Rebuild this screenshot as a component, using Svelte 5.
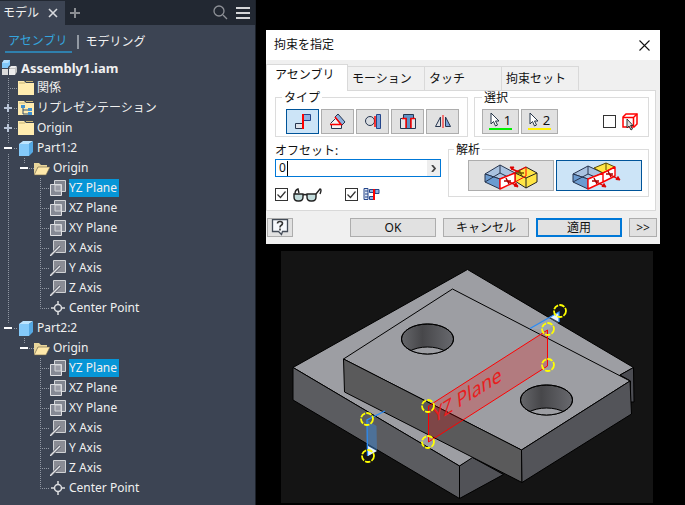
<script>
  const planes = ['YZ Plane', 'XZ Plane', 'XY Plane'];
  const axes = ['X Axis', 'Y Axis', 'Z Axis'];

  function part(name, last) {
    return [
      { label: name, icon: 'cube', depth: 1, mark: 'minus', last },
      { label: 'Origin', icon: 'open', depth: 2, mark: 'minus', trunk: !last },
      ...planes.map((label, i) => ({ label, icon: 'plane', depth: 3, trunk: !last, selected: i === 0 })),
      ...axes.map((label) => ({ label, icon: 'axis', depth: 3, trunk: !last })),
      { label: 'Center Point', icon: 'point', depth: 3, trunk: !last, end: true }
    ];
  }

  const rows = [
    { label: '関係', icon: 'folder', depth: 1 },
    { label: 'リプレゼンテーション', icon: 'views', depth: 1, mark: 'plus' },
    { label: 'Origin', icon: 'folder', depth: 1, mark: 'plus' },
    ...part('Part1:2', false),
    ...part('Part2:2', true)
  ];

  const types = ['mate', 'angle', 'tangent', 'insert', 'symmetry'];
  const typeNames = ['メイト', '角度', '正接', '挿入', '対称'];
  const tabs = ['アセンブリ', 'モーション', 'タッチ', '拘束セット'];
  const handles = [[560, 311], [548, 329], [548, 365], [428, 406], [428, 442], [367, 419], [368, 456]];

  let activeTab = $state(0);
  let type = $state('mate');
  let solution = $state('flush');
  let offset = $state('0');
  let preview = $state(true);
  let predict = $state(true);
  let pickFirst = $state(false);
</script>

<div class="app">
  <aside>
    <header>
      <div class="doc">モデル
        <button aria-label="閉じる"><svg width="10" height="10" viewBox="0 0 10 10"><path d="M1 1l8 8M9 1l-8 8" stroke="#d8dade" stroke-width="1.6" /></svg></button>
      </div>
      <button aria-label="追加"><svg width="12" height="12" viewBox="0 0 12 12"><path d="M6 1v10M1 6h10" stroke="#8b8e93" stroke-width="2" /></svg></button>
      <span class="spring"></span>
      <button aria-label="検索"><svg width="15" height="15" viewBox="0 0 15 15" fill="none" stroke="#8e9197" stroke-width="1.3"><circle cx="6" cy="6" r="5" /><path d="M10 10l4 4" /></svg></button>
      <button aria-label="メニュー"><svg width="14" height="12" viewBox="0 0 14 12"><path d="M0 1h14M0 6h14M0 11h14" stroke="#d6d7d9" stroke-width="2" /></svg></button>
    </header>
    <nav>
      <a class="on" href="#assembly">アセンブリ</a>
      <i></i>
      <a href="#modeling">モデリング</a>
    </nav>

    <div class="root">
      <svg width="16" height="16" viewBox="0 0 16 16">
        <path d="M0 3l2-3h6v5l-2 2v1H0z" fill="#80c8fa" /><path d="M0 3l2-3h6L6 3z" fill="#b4e0ff" />
        <path d="M0 9h6v6H0z" fill="#dcdcdc" /><path d="M7 9l2-2h6v5l-2 3H7z" fill="#c2c2c2" /><path d="M7 9h6v6H7zM7 8l2-2h6l-2 2z" fill="#ececec" />
      </svg>
      <b>Assembly1.iam</b>
    </div>
    <ul>
      {#each rows as row}
        <li>
          <svg class="guide" width={row.depth * 16 + 2} height="20" viewBox="0 0 {row.depth * 16 + 2} 20">
            <g stroke="#9299a4" stroke-dasharray="1 1" fill="none">
              {#if row.depth === 1 && !row.last}<path d="M8.500 0v20" />{/if}
              {#if row.last}<path d="M8.500 0v6" />{/if}
              {#if row.trunk}<path d="M8.500 0v20" />{/if}
              {#if row.depth === 1}<path d="M10 10.500h7" />{/if}
              {#if row.depth === 2}<path d="M24.500 0v5M27 10.500h7" />{/if}
              {#if row.depth === 3}<path d={row.end ? 'M40.500 0v10.500h9' : 'M40.500 0v20M40 10.500h9'} />{/if}
            </g>
            {#if row.mark}
              <g transform="translate({row.depth * 16 - 8} 10)">
                <path d="M-5 -5h10v10h-10z" fill="#3c4453" />
                <path d="M-4 0h8" stroke={row.mark === 'plus' ? '#b9c4d6' : '#fff'} stroke-width="2" />
                {#if row.mark === 'plus'}<path d="M0 -4v8" stroke="#b9c4d6" stroke-width="2" />{/if}
              </g>
            {/if}
          </svg>
          <svg class="ico" width="16" height="16" viewBox="0 0 16 16">
            {#if row.icon === 'folder' || row.icon === 'views'}
              <path d="M0 1h6l2 2h8v12H0z" fill="#ffecb0" /><path d="M1 3h6M8 1.500h7" stroke="#c9b577" />
              {#if row.icon === 'views'}
                <path d="M3 5h4v3H3zM10 8h4v3h-4zM10 12h4v3h-4z" fill="#3f8fd0" /><path d="M5 8v6h5M5 10h5" stroke="#34506c" fill="none" />
              {/if}
            {:else if row.icon === 'open'}
              <path d="M0 3h5l2 2h6v2H4L1 14H0z" fill="#e8d59b" /><path d="M4 7h12l-4 8H0z" fill="#ffe9aa" stroke="#6b6247" stroke-width=".6" />
            {:else if row.icon === 'cube'}
              <path d="M1 4h10v12H1z" fill="#84cafa" /><path d="M1 4l4-3h10l-4 3z" fill="#bce4ff" /><path d="M11 4l4-3v11l-4 4z" fill="#55a9e4" />
            {:else if row.icon === 'plane'}
              <path d="M4.500.500h11v11h-11z" fill="#828690" stroke="#d3d5d8" /><path d="M.500 4.500h11v11H.500z" fill="#858994" stroke="#e0e1e4" /><path d="M5 11V5h6v6z" fill="#9a9ca6" stroke="#d3d5d8" />
            {:else if row.icon === 'axis'}
              <path d="M3.500.500h12v12h-12z" fill="#8a8c94" stroke="#cfd1d4" /><path d="M0 16L10 6" stroke="#555a66" stroke-width="3" /><path d="M0 16L10 6" stroke="#e4e4e6" stroke-width="1.400" />
            {:else}
              <circle cx="8" cy="8" r="3.500" fill="none" stroke="#dcdde0" stroke-width="1.500" /><path d="M8 1v4M8 11v4M1 8h4M11 8h4" stroke="#dcdde0" stroke-width="1.500" />
            {/if}
          </svg>
          <span class:selected={row.selected}>{row.label}</span>
        </li>
      {/each}
    </ul>
  </aside>

  <main>
    <form class="dialog" onsubmit={(e) => e.preventDefault()}>
      <div class="title">拘束を指定
        <button type="button" aria-label="閉じる"><svg width="11" height="11" viewBox="0 0 11 11"><path d="M.500.500l10 10M10.500.500l-10 10" stroke="#111" stroke-width="1.100" /></svg></button>
      </div>
      <div class="tabs">
        {#each tabs as tab, i}
          <button type="button" class:active={activeTab === i} onclick={() => (activeTab = i)}>{tab}</button>
        {/each}
      </div>
      <div class="pane">
        <div class="line">
          <fieldset class="types">
            <legend>タイプ</legend>
            {#each types as t, i}
              <button type="button" aria-label={typeNames[i]} class:on={type === t} onclick={() => (type = t)}>
                <svg width="18" height="17" viewBox="0 0 18 17" fill="none" stroke="#26354f">
                  {#if t === 'mate'}
                    <path d="M1.500 10.500h7v5h-7z" fill="#dfe3ea" /><path d="M9.500 1.500h7v6h-7z" fill="#8fb2e2" stroke="#24458a" /><path d="M9 1v15" stroke="#f00" stroke-width="2" />
                  {:else if t === 'angle'}
                    <path d="M6 4l3-3 7 8-3 3z" fill="#8fb0dc" /><path d="M1.500 10.500l5-5 5 5M2.500 11.500h10v4h-10z" fill="#f5f5f5" /><path d="M6 4l6 7.500H1" stroke="#f00" stroke-width="1.500" />
                  {:else if t === 'tangent'}
                    <circle cx="6" cy="8" r="4.500" fill="#d7dbe0" /><path d="M12.500 1.500h4v14h-4z" fill="#7ba3dc" stroke="#24458a" /><path d="M11 3v11" stroke="#f00" stroke-width="1.500" />
                  {:else if t === 'insert'}
                    <path d="M1.500 5.500h15v10h-15z" fill="#e3e6ea" /><path d="M4.500 1.500h10v4h-3v10h-4v-10h-3z" fill="#5f94c8" /><path d="M3 5.500h4V15M16 5.500h-4V15" stroke="#f00" stroke-width="1.500" />
                  {:else}
                    <path d="M6.500 4v9.500h-5z" fill="#dfe1e5" /><path d="M11.500 4v9.500h5z" fill="#7ba3dc" /><path d="M9 2v13" stroke="#f00" />
                  {/if}
                </svg>
              </button>
            {/each}
          </fieldset>
          <fieldset class="picks">
            <legend>選択</legend>
            {#each [['1', '#00f000'], ['2', '#fff000']] as [n, color]}
              <button type="button">
                <svg width="10" height="15" viewBox="0 0 10 15"><path d="M1 1v11l2.500-2.500L5.500 14l2-1-2-4H9z" fill="#fff" stroke="#27364a" /></svg>
                {n}
                <em style:background={color}></em>
              </button>
            {/each}
            <label>
              <input type="checkbox" aria-label="最初にパーツを選択" bind:checked={pickFirst} />
              <svg width="16" height="18" viewBox="0 0 16 18"><path d="M1 4l3-3h11v10l-3 3H1z" fill="#fff" stroke="#f00" stroke-width="1.500" /><path d="M1 4.500h10.500V14M11.500 4.500L15 1" fill="none" stroke="#f00" stroke-width="1.500" /><path d="M5 6v9l2-2 2 4 1.500-1-2-3.500H11z" fill="#ddd" stroke="#333" /></svg>
            </label>
          </fieldset>
        </div>
        <div class="line second">
          <div class="offset">
            <label for="offset">オフセット:</label>
            <div class="field">
              <input id="offset" type="text" bind:value={offset} /><i></i>
              <button type="button" aria-label="値の履歴"><svg width="6" height="7" viewBox="0 0 6 7"><path d="M1 0l3 3.500L1 7" fill="none" stroke="#444" stroke-width="1.800" /></svg></button>
            </div>
            <div class="checks">
              <label>
                <input type="checkbox" aria-label="プレビューを表示" bind:checked={preview} />
                <svg width="29" height="14" viewBox="0 0 29 14" fill="#c2dcdc" stroke="#222" stroke-width="1.400"><path d="M1 6h9v3q0 4-4 4H5q-4 0-4-4zM14 6h9v3q0 4-4 4h-1q-4 0-4-4z" /><path d="M10 7q2-1 4 0M2 6Q2 2 5 1l1 4M23 6l4-5q2 0 0 5" fill="none" /></svg>
              </label>
              <label>
                <input type="checkbox" aria-label="オフセットと方向を予測" bind:checked={predict} />
                <svg width="17" height="13" viewBox="0 0 17 13" stroke="#24458a"><path d="M1 .500h4v11H1z" fill="#dfe7f3" /><path d="M2 3h3M2 6h3M2 9h3" /><path d="M6.500 1.500h4v3h-4zM6.500 8.500h4v3h-4zM12 1.500h4v4h-4z" fill="#8fb2e2" /><path d="M11 1v11" stroke="#f00" stroke-width="2" /></svg>
              </label>
            </div>
          </div>
          <fieldset class="solve">
            <legend>解析</legend>
            {#each ['mate', 'flush'] as s}
              <button type="button" aria-label={s === 'mate' ? 'メイト' : 'フラッシュ'} class:on={solution === s} onclick={() => (solution = s)}>
                <svg width="54" height="28" viewBox="0 0 54 28" stroke-linejoin="round">
                  {#if s === 'mate'}
                    <path d="M1 12L16 3l15 8-15 6z" fill="#a9c2e0" stroke="#26354f" /><path d="M1 12l15 5v10L1 20z" fill="#6b9bd0" stroke="#26354f" /><path d="M16 3v8L1 20M16 11l12 6" fill="none" stroke="#26354f" />
                    <path d="M31 11l11-6 11 6v9l-11 6-11-7z" fill="#ffe545" stroke="#222" /><path d="M31 11l11 5 11-5M42 16v10" fill="none" stroke="#222" />
                    <path d="M16 17l15-6v9l-15 7z" fill="#fff" stroke="#f00" stroke-width="1.400" /><path d="M31 10l11-5v9l-11 6" fill="none" stroke="#f00" />
                    <g stroke="#d00" fill="#d00"><path d="M23 19l11 5M37 11L28 7" stroke-width="1.400" /><path d="M34 25l-4-1 2-3zM26 5l4 0-2 3z" /></g>
                    <path d="M20 19h7M22 16l3 6" stroke="#a00" stroke-width="1.400" /><path d="M33 11h7M35 8l3 6" stroke="#665500" stroke-width="1.400" />
                  {:else}
                    <path d="M1 12l15-8 15 7-15 6z" fill="#a9c2e0" stroke="#26354f" /><path d="M1 12l15 5v10L1 20z" fill="#6b9bd0" stroke="#26354f" /><path d="M16 4v8L1 20M16 12l12 5" fill="none" stroke="#26354f" />
                    <path d="M22 6l12-5 9 4-12 6z" fill="#ffe545" stroke="#5a4b00" /><path d="M34 1v7" stroke="#5a4b00" />
                    <path d="M16 17l15-6v9l-15 7zM31 11l12-6v9l-12 6z" fill="#fff" stroke="#f00" stroke-width="1.400" />
                    <g stroke="#d00" fill="#d00"><path d="M23 19l9 5M37 12l9 5" stroke-width="1.400" /><path d="M34 25l-4-.500 2-3zM48 18l-4-.500 2-3z" /></g>
                    <path d="M20 19h7M22 16l3 6M34 12h7M36 9l3 6" stroke="#a00" stroke-width="1.400" />
                  {/if}
                </svg>
              </button>
            {/each}
          </fieldset>
        </div>
      </div>
      <footer>
        <button type="button" class="help" aria-label="ヘルプ"><svg width="18" height="17" viewBox="0 0 18 17"><path d="M1.500.500h15v12h-5l-1 3-3-3h-6z" fill="#f6f8fc" stroke="#444c58" stroke-width="1.300" /><path d="M6.500 4.500q0-2 2.500-2t2.500 2q0 1-1.500 2-1 .500-1 2M9 9.500v2" fill="none" stroke="#333" stroke-width="1.600" /></svg></button>
        <button type="button">OK</button>
        <button type="button">キャンセル</button>
        <button type="submit" class="primary">適用</button>
        <button type="button" class="more">&gt;&gt;</button>
      </footer>
    </form>

    <svg class="scene" viewBox="281 251 372 252" role="img" aria-label="YZ Plane">
      <defs>
        <linearGradient id="bore"><stop offset="0" stop-color="#66676b" /><stop offset=".4" stop-color="#47474a" /><stop offset="1" stop-color="#68696e" /></linearGradient>
        <clipPath id="hole"><ellipse rx="26" ry="15" /></clipPath>
      </defs>
      <path d="M281 251h372v252H281z" fill="#141414" />
      <g stroke="#000" stroke-linejoin="round">
        <path d="M467.500 269.500L633.500 367.500 459.500 466 293 367.500z" fill="#9d9ea3" />
        <path d="M293 367.500L459.500 466v32.500L293 400z" fill="#5b5c60" />
        <path d="M459.500 466l13-8.500 31 17-44 24z" fill="#515257" />
        <path d="M620 375l13.500-7.500.500 34.500h-3.500V381z" fill="#4b4c52" />
        <path d="M452.500 289L630 381l-108.500 69-178-91z" fill="#9d9ea3" />
        <path d="M343.500 359l178 91 .500 32.500L344.500 392z" fill="#5a5a5b" />
        <path d="M521.500 450L630 381l1.500 33L522 482.500z" fill="#535459" />
        {#each [[427.5, 339], [546.5, 400]] as [x, y]}
          <g transform="translate({x} {y})">
            <ellipse rx="26" ry="15" fill="url(#bore)" />
            <ellipse cy="23" rx="26" ry="15" fill="#9d9ea3" clip-path="url(#hole)" />
            <ellipse rx="26" ry="15" fill="none" />
          </g>
        {/each}
      </g>
      <path d="M367.500 420l9 6 .500 24-9 6z" fill="#3f86d0" fill-opacity=".5" />
      <path d="M530 328.500l29-16.500v10l-12 8z" fill="#9ab4d4" fill-opacity=".35" />
      <path d="M550 317l9-5v10zM368 446l9 5-9 5z" fill="#e4f1ff" />
      <path d="M530 328.500l29-16.500v10M385 411l-18 9 .500 36" fill="none" stroke="#2b8cf5" stroke-width="1.300" />
      <path d="M428.500 406l119-76v36l-119 76z" fill="#f00" fill-opacity=".22" stroke="#f00" />
      <text transform="matrix(.85 -.53 .1 1 434 423)" font-size="20">YZ Plane</text>
      {#each handles as [x, y]}
        <circle cx={x} cy={y} r="6" fill="none" stroke="#ff0" stroke-width="1.800" stroke-dasharray="5.500 1.200" />
      {/each}
    </svg>
  </main>
</div>

<style>
  :global(body) { margin: 0; background: #000; }
  .app { display: flex; min-height: 100vh; font: 13px/18px "Noto Sans", "Noto Sans CJK JP", sans-serif; color: #f0f0f0; }
  button { margin: 0; padding: 0; border: 0; background: none; font: inherit; color: inherit; display: flex; align-items: center; justify-content: center; }
  svg { display: block; flex: none; }
  input { margin: 0; }

  aside { flex: 0 0 255px; background: #3c4453; border-right: 1px solid #1c2129; }
  header { display: flex; align-items: center; gap: 8px; height: 25px; padding-right: 5px; background: #222832; font-size: 12px; }
  .doc { display: flex; align-items: center; justify-content: space-between; width: 55px; height: 24px; margin-top: 1px; padding: 0 7px 0 3px; background: #3c4453; margin-right: -4px; }
  .spring { flex: 1; }
  nav { display: flex; align-items: center; height: 33px; padding-left: 5px; font-size: 12px; }
  nav a { color: #f0f0f0; text-decoration: none; height: 20px; line-height: 20px; }
  nav .on { color: #35a4dd; padding: 0 5px 0 3px; border-bottom: 2px solid #2f80ad; }
  nav i { width: 2px; height: 14px; margin: 0 6px 0 5px; background: #9299a3; }
  .root { display: flex; align-items: center; gap: 3px; height: 20px; padding-left: 2px; }
  ul { list-style: none; margin: 0; padding: 0; }
  li { display: flex; height: 20px; align-items: center; white-space: nowrap; font-size: 12px; }
  li span { margin-left: 3px; }
  .selected { padding-right: 2px; background: #0696d7; }

  main { flex: 1; min-width: 0; background: #000; }
  .dialog { margin: 30px 25px 7px 10px; background: #f0f0f0; color: #111; font-size: 12px; }
  .title { display: flex; align-items: center; justify-content: space-between; height: 30px; padding: 0 10px 0 8px; background: #fff; }
  .tabs { display: flex; align-items: flex-end; height: 30px; }
  .tabs button { height: 24px; width: 77px; padding-left: 4px; border: 1px solid #d9d9d9; border-left: 0; border-bottom: 0; justify-content: flex-start; }
  .tabs .active { position: relative; z-index: 1; width: 82px; height: 27px; padding: 0 0 6px 8px; border-left: 1px solid #d9d9d9; background: #fff; margin-bottom: -1px; }
  .pane { margin-right: 4px; padding: 0 6px 9px 8px; border: 1px solid #d9d9d9; background: #fff; }
  .line { display: flex; gap: 6px; align-items: flex-start; }
  .second { margin-top: 6px; gap: 7px; }
  fieldset { display: flex; min-width: 0; margin: 0; border: 1px solid #dcdcdc; box-sizing: border-box; }
  legend { padding: 0 2px; line-height: 13px; }
  fieldset button { height: 25px; border: 1px solid #adadad; background: #e1e1e1; box-sizing: border-box; }
  fieldset .on { background: #cce4f7; border-color: #005499; }
  .types { flex: 193 1 193px; gap: 2px; padding: 5px 8px 2px 10px; }
  .types legend { margin-left: -4px; }
  .types button { flex: 1; }
  .picks { flex: 175 1 175px; gap: 2px; padding: 5px 10px 2px 7px; align-items: center; }
  .picks button { position: relative; width: 37px; gap: 4px; padding-bottom: 4px; font-size: 13px; }
  .picks em { position: absolute; left: 6px; right: 6px; bottom: 3px; height: 2px; }
  .picks label { display: flex; align-items: center; gap: 6px; margin-left: auto; }
  input[type='checkbox'] { appearance: none; width: 13px; height: 13px; border: 1px solid #333; background: #fff; }
  input[type='checkbox']:checked { background: #fff url("data:image/svg+xml,%3Csvg xmlns='http://www.w3.org/2000/svg' viewBox='0 0 11 11'%3E%3Cpath d='M1.500 5.500l3 3 5-6' fill='none' stroke='%23333' stroke-width='1.200'/%3E%3C/svg%3E"); }
  .offset { flex: 166 1 166px; }
  .offset > label { display: block; line-height: 16px; }
  .field { display: flex; align-items: center; height: 18px; box-sizing: border-box; border: 1px solid #0078d7; }
  .field input { width: 8px; padding: 0 0 0 3px; border: 0; outline: 0; font: inherit; background: none; color: #111; }
  .field i { width: 1px; height: 15px; background: #000; }
  .field button { width: 13px; height: 16px; margin-left: auto; background: #eee; }
  .checks { display: flex; gap: 23px; margin-top: 11px; }
  .checks label { display: flex; align-items: center; height: 13px; gap: 5px; }
  .solve { flex: 201 1 201px; gap: 2px; padding: 4px 6px 5px 19px; }
  .solve legend { margin-left: -14px; }
  .solve button { flex: 1; height: 31px; }
  footer { display: flex; gap: 7px; padding: 7px 3px 7px 1px; }
  footer button { flex: 0 1 86px; height: 19px; box-sizing: border-box; border: 1px solid #adadad; background: #e1e1e1; }
  footer .help { flex: none; width: 26px; margin-right: auto; }
  footer .primary { border: 2px solid #0078d7; }
  footer .more { flex: none; width: 28px; }
  .scene { width: calc(100% - 57px); margin: 0 32px 0 25px; }
  .scene text { fill: #e81e1e; font-family: "Noto Sans", sans-serif; }
</style>
